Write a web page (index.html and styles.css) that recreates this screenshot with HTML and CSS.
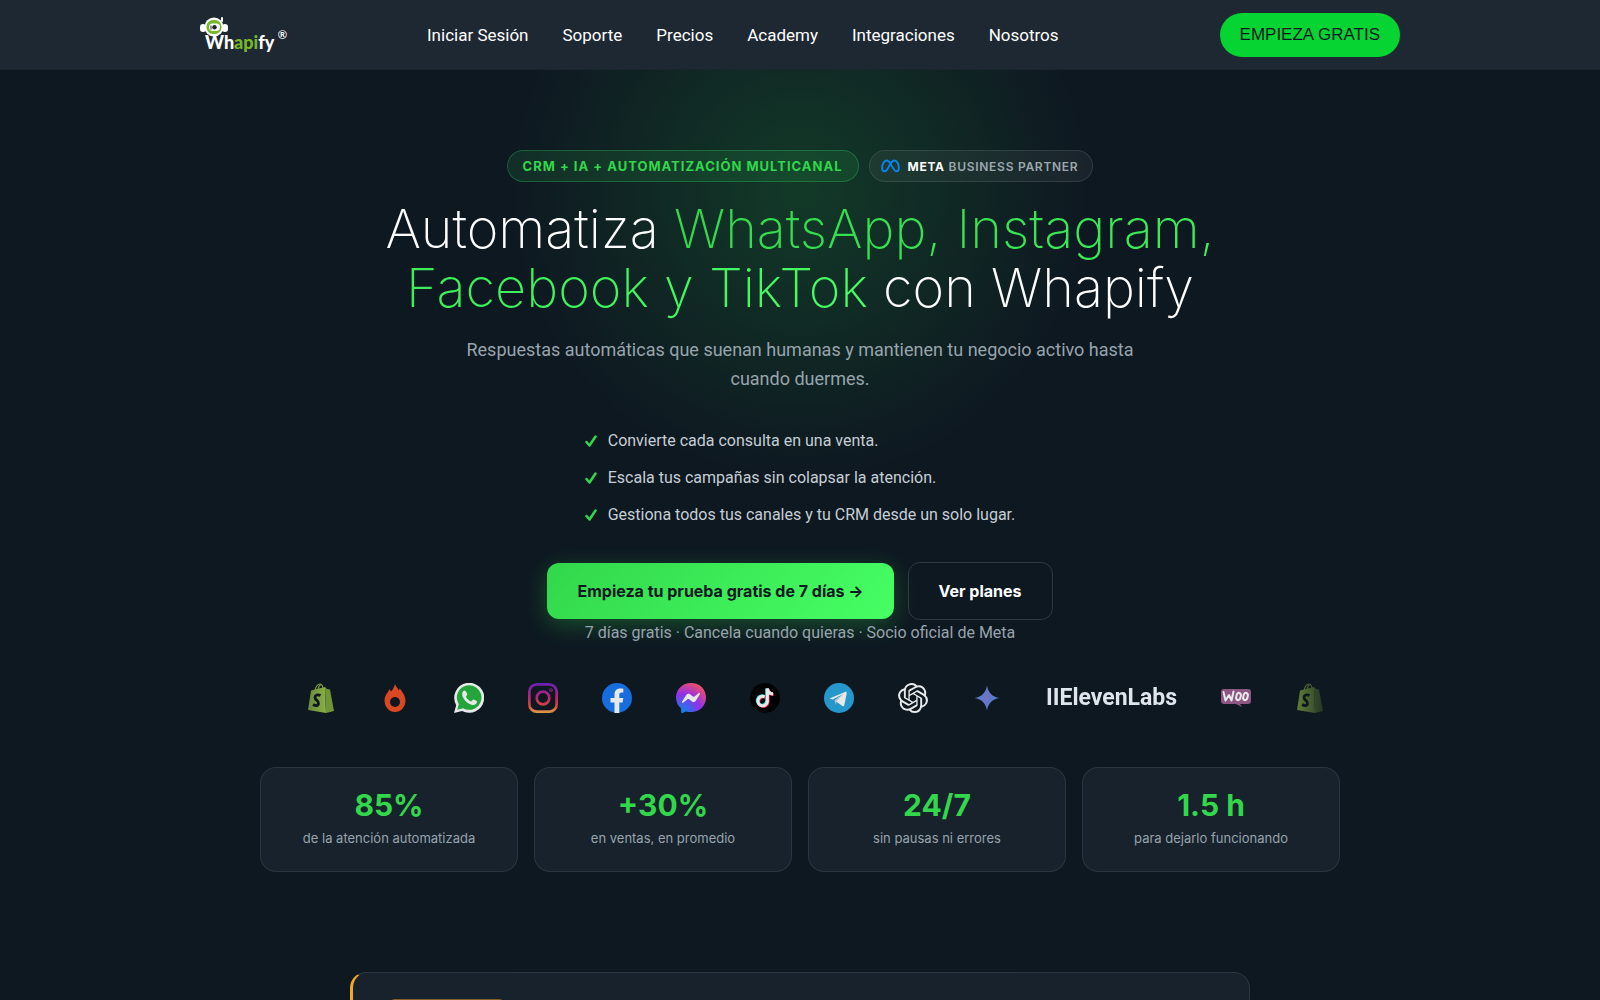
FILE: index.html
```html
<!DOCTYPE html>
<html lang="es">
<head>
    <meta charset="UTF-8">
    <meta name="viewport" content="width=device-width, initial-scale=1.0">
    <title>Whapify</title>
    <link rel="stylesheet" href="styles.css">
</head>
<body>
    <header class="header">
        <div class="header-inner">
            <a href="#" class="logo" aria-label="Whapify">
                <svg width="90" height="40" viewBox="0 0 90 40">
                    <rect x="0" y="9" width="6" height="8" rx="3" fill="#fff"/>
                    <rect x="22" y="9" width="6" height="8" rx="3" fill="#fff"/>
                    <path d="M22 6V3" stroke="#fff" stroke-width="2" stroke-linecap="round"/>
                    <circle cx="14" cy="12" r="9.500" fill="#fff"/>
                    <rect x="6.500" y="5" width="15" height="14" rx="6.500" fill="#76b82a"/>
                    <rect x="9" y="8.500" width="11" height="7.500" rx="3.700" fill="#fff"/>
                    <circle cx="14.500" cy="12.300" r="2.200" fill="#1e2832"/>
                    <path d="M11 10.500v4" stroke="#1e2832" stroke-width="1"/>
                    <text x="5" y="34" class="logo-text">Wh<tspan class="logo-green">api</tspan>fy</text>
                    <text x="78" y="24" class="logo-mark">®</text>
                </svg>
            </a>
            <nav class="nav">
                <a href="#">Iniciar Sesión</a>
                <a href="#">Soporte</a>
                <a href="#">Precios</a>
                <a href="#">Academy</a>
                <a href="#">Integraciones</a>
                <a href="#">Nosotros</a>
            </nav>
            <a href="#" class="header-cta">EMPIEZA GRATIS</a>
        </div>
    </header>

    <main>
        <section class="hero">
            <div class="badges">
                <span class="badge badge-green">CRM + IA + AUTOMATIZACIÓN MULTICANAL</span>
                <span class="badge badge-meta">
                    <svg width="19" height="14" viewBox="0 0 20 14" fill="none" stroke="#0a84e8" stroke-width="2" stroke-linejoin="round"><path d="M10 4.500C8.800 2.500 7.500 1.200 5.800 1.200 3 1.200 1.200 5.500 1.200 9c0 2.200.9 3.600 2.500 3.600C5.800 12.600 7.200 10 10 4.500c1.200-2 2.500-3.300 4.200-3.300 2.800 0 4.600 4.300 4.600 7.800 0 2.200-.9 3.600-2.500 3.600C14.200 12.600 12.800 9.500 10 4.500z"/></svg>
                    <span><strong>META</strong> BUSINESS PARTNER</span>
                </span>
            </div>

            <h1>Automatiza <span class="highlight">WhatsApp, Instagram,<br>Facebook y TikTok</span> con Whapify</h1>
            <p class="subtitle">Respuestas automáticas que suenan humanas y mantienen tu negocio activo hasta cuando duermes.</p>

            <ul class="benefits">
                <li><svg class="check" viewBox="0 0 12 12"><path d="M1.500 7l3 3.500L10.500 1.500"/></svg>Convierte cada consulta en una venta.</li>
                <li><svg class="check" viewBox="0 0 12 12"><path d="M1.500 7l3 3.500L10.500 1.500"/></svg>Escala tus campañas sin colapsar la atención.</li>
                <li><svg class="check" viewBox="0 0 12 12"><path d="M1.500 7l3 3.500L10.500 1.500"/></svg>Gestiona todos tus canales y tu CRM desde un solo lugar.</li>
            </ul>

            <div class="actions">
                <a href="#" class="btn btn-primary">Empieza tu prueba gratis de 7 días →</a>
                <a href="#" class="btn btn-outline">Ver planes</a>
            </div>
            <p class="note">7 días gratis · Cancela cuando quieras · Socio oficial de Meta</p>

            <div class="brands">
                <svg viewBox="0 0 30 30">
                    <path d="M9 8c0-4 3-7 5-7 2 0 3 3 3 6M12 7c0-3 2-5.500 4-5.500" fill="none" stroke="#95bf47" stroke-width="1.200"/>
                    <path d="M5 7.500L19 4l1 26L2 27z" fill="#95bf47"/>
                    <path d="M19 4l2 2 3 .5L28 28l-8 2z" fill="#7ba23c"/>
                    <path d="M14.500 12.500c-3-1.500-5.500-.5-5.500 2 0 3 4 3 3.500 6-.3 2.500-3 2.500-5.500 1" fill="none" stroke="#0f1822" stroke-width="2.800"/>
                </svg>
                <svg viewBox="0 0 30 30">
                    <path d="M15 1c1 3 3 4 3.500 6.500L20 5.500c1 2.500 5.500 6 5.500 12.500a10.500 11 0 0 1-21 0C4.500 12 8 10 9.500 6l1.500 2.500C13 6.500 14 4 15 1z" fill="#f04e23"/>
                    <circle cx="15" cy="19" r="5" fill="#0f1822"/>
                </svg>
                <svg viewBox="0 0 30 30">
                    <path d="M0 30l2.200-7.800A15 15 0 1 1 8 27.900z" fill="#fff"/>
                    <path d="M3.300 26.700l1.500-5.500A12.300 12.300 0 1 1 9 25.200z" fill="#27b43e"/>
                    <path d="M10.500 7.500c-1.300.3-2.500 2-2.300 4 .5 5 6.500 10.500 10.800 10.500 2.200 0 4-1.500 4-3.500 0-.6-3-2-3.600-2-.8 0-1.500 2-2.400 1.900-1.800-.4-4.500-3-5-4.700-.2-.8 1.500-1.500 1.300-2.500-.2-.7-1.500-3.700-2.800-3.700z" fill="#fff"/>
                </svg>
                <svg viewBox="0 0 30 30" fill="none" stroke="url(#insta)" stroke-width="2.700">
                    <defs><linearGradient id="insta" gradientUnits="userSpaceOnUse" x1="15" y1="0" x2="15" y2="30"><stop offset="0" stop-color="#7024c4"/><stop offset=".45" stop-color="#c92683"/><stop offset=".75" stop-color="#e64a45"/><stop offset="1" stop-color="#f2ae4f"/></linearGradient></defs>
                    <rect x="1.350" y="1.350" width="27.300" height="27.300" rx="7.500"/>
                    <circle cx="15" cy="15" r="6.300"/>
                    <circle cx="23" cy="7" r=".5"/>
                </svg>
                <svg viewBox="0 0 30 30">
                    <circle cx="15" cy="15" r="15" fill="#1877f2"/>
                    <path d="M12.500 30V19.500H8.500V15h4v-3.500c0-4 2.400-6 5.800-6 1.500 0 3 .2 3 .2v3.800h-1.700c-1.700 0-2.300 1-2.300 2.200V15h4l-.7 4.500h-3.300V30z" fill="#fff"/>
                </svg>
                <svg viewBox="0 0 30 30">
                    <defs><radialGradient id="msg" cx=".2" cy="1" r="1.150"><stop offset="0" stop-color="#0099ff"/><stop offset=".55" stop-color="#a033ff"/><stop offset=".9" stop-color="#ff5280"/><stop offset="1" stop-color="#ff7061"/></radialGradient></defs>
                    <path d="M15 0C6.500 0 0 6.200 0 14.500c0 4.300 1.800 8 4.700 10.600.8.800.3 3.500.6 4.500.4.700 1.200.4 1.800.1l2.800-1.300c1.600.4 3.300.7 5.100.7 8.500 0 15-6.200 15-14.600S23.500 0 15 0z" fill="url(#msg)"/>
                    <path d="M6 18.700l4.400-7c.7-1.100 2.200-1.400 3.300-.6l3.500 2.600c.3.200.7.200 1 0l4.700-3.600c.7-.5 1.500.3 1.100 1l-4.400 7c-.7 1.100-2.200 1.400-3.300.6l-3.500-2.600c-.3-.2-.7-.2-1 0l-4.700 3.600c-.7.500-1.500-.3-1.100-1z" fill="#fff"/>
                </svg>
                <svg viewBox="0 0 30 30">
                    <circle cx="15" cy="15" r="15" fill="#000"/>
                    <g fill="none" stroke-width="3">
                        <path d="M14 13.200a4.700 4.700 0 1 0 2.700 4.700V5.500c.4 3.300 2.600 5 5.600 5.200" stroke="#25f4ee"/>
                        <path d="M15.400 14.400a4.700 4.700 0 1 0 2.700 4.700V6.200c.4 3.300 2.600 5 5.600 5.200" stroke="#fe2c55"/>
                        <path d="M14.700 13.800a4.700 4.700 0 1 0 2.700 4.700V5.500c.4 3.600 2.600 5.300 5.600 5.500" stroke="#fff"/>
                    </g>
                </svg>
                <svg viewBox="0 0 30 30">
                    <circle cx="15" cy="15" r="15" fill="#29a6de"/>
                    <path d="M5.500 15.500L21 8.900c1-.4 1.900.2 1.700 1.500l-2.400 11.900c-.2 1-1 1.200-1.800.7l-8-5.500 9-6.500-11 5.500z" fill="#fff"/>
                    <path d="M10.500 17.500l9-6.500-7 7.500-.5 3.500z" fill="#c8daea"/>
                </svg>
                <svg viewBox="0 0 24 24" fill="#fff">
                    <path d="M22.282 9.821a5.985 5.985 0 0 0-.516-4.910 6.046 6.046 0 0 0-6.510-2.900A6.065 6.065 0 0 0 4.981 4.182a5.985 5.985 0 0 0-3.998 2.900 6.046 6.046 0 0 0 .743 7.097 5.980 5.980 0 0 0 .511 4.911 6.051 6.051 0 0 0 6.515 2.900A5.985 5.985 0 0 0 13.260 24a6.056 6.056 0 0 0 5.772-4.206 5.990 5.990 0 0 0 3.998-2.900 6.056 6.056 0 0 0-.748-7.073zM13.260 22.430a4.476 4.476 0 0 1-2.876-1.041l.142-.080 4.778-2.758a.795.795 0 0 0 .393-.682v-6.737l2.020 1.169a.071.071 0 0 1 .038.052v5.583a4.504 4.504 0 0 1-4.495 4.494zM3.600 18.304a4.471 4.471 0 0 1-.535-3.014l.142.085 4.783 2.759a.771.771 0 0 0 .781 0l5.843-3.369v2.332a.080.080 0 0 1-.033.062L9.740 19.950a4.499 4.499 0 0 1-6.140-1.646zM2.341 7.896a4.485 4.485 0 0 1 2.366-1.973v5.677a.766.766 0 0 0 .388.677l5.814 3.354-2.020 1.169a.076.076 0 0 1-.071 0l-4.830-2.787A4.504 4.504 0 0 1 2.341 7.872zm16.596 3.856l-5.833-3.388 2.015-1.164a.076.076 0 0 1 .071 0l4.830 2.792a4.494 4.494 0 0 1-.676 8.104v-5.677a.790.790 0 0 0-.407-.667zm2.011-3.024l-.142-.085-4.774-2.782a.776.776 0 0 0-.785 0L9.409 9.230V6.897a.066.066 0 0 1 .028-.061l4.830-2.787a4.499 4.499 0 0 1 6.681 4.660zM8.307 12.863l-2.020-1.164a.080.080 0 0 1-.038-.057V6.075a4.499 4.499 0 0 1 7.376-3.454l-.142.081L8.704 5.460a.795.795 0 0 0-.393.681zm1.097-2.365l2.602-1.500 2.607 1.500v2.999l-2.597 1.500-2.607-1.500z"/>
                </svg>
                <svg viewBox="0 0 30 30">
                    <defs><linearGradient id="gem" x1="0" y1=".2" x2="1" y2=".8"><stop offset="0" stop-color="#4796e3"/><stop offset=".5" stop-color="#7b7fd6"/><stop offset="1" stop-color="#3f8fe6"/></linearGradient></defs>
                    <path d="M15 2.500c1.200 7.200 5.300 11.300 12.500 12.500-7.200 1.200-11.300 5.300-12.500 12.500C13.800 20.300 9.700 16.200 2.500 15 9.700 13.800 13.800 9.700 15 2.500z" fill="url(#gem)"/>
                </svg>
                <span class="eleven">IIElevenLabs</span>
                <svg viewBox="0 0 30 30">
                    <path d="M3 6h24a3 3 0 0 1 3 3v9a3 3 0 0 1-3 3h-8l2 3-6-3H3a3 3 0 0 1-3-3V9a3 3 0 0 1 3-3z" fill="#9b5c8f"/>
                    <g fill="none" stroke="#fff" stroke-width="2" stroke-linecap="round" stroke-linejoin="round"><path d="M2.500 9l2 8.500L8 12l2.500 5.500 2-9"/><ellipse cx="17.500" cy="13.500" rx="2.200" ry="3.700" transform="rotate(15 17.500 13.500)"/><ellipse cx="24.500" cy="13.500" rx="2.200" ry="3.700" transform="rotate(15 24.500 13.500)"/></g>
                </svg>
                <svg viewBox="0 0 30 30">
                    <path d="M9 8c0-4 3-7 5-7 2 0 3 3 3 6M12 7c0-3 2-5.500 4-5.500" fill="none" stroke="#95bf47" stroke-width="1.200"/>
                    <path d="M5 7.500L19 4l1 26L2 27z" fill="#95bf47"/>
                    <path d="M19 4l2 2 3 .5L28 28l-8 2z" fill="#7ba23c"/>
                    <path d="M14.500 12.500c-3-1.500-5.500-.5-5.500 2 0 3 4 3 3.500 6-.3 2.500-3 2.500-5.500 1" fill="none" stroke="#0f1822" stroke-width="2.800"/>
                </svg>
            </div>

            <div class="stats">
                <div class="stat"><strong>85%</strong><span>de la atención automatizada</span></div>
                <div class="stat"><strong>+30%</strong><span>en ventas, en promedio</span></div>
                <div class="stat"><strong>24/7</strong><span>sin pausas ni errores</span></div>
                <div class="stat"><strong>1.5 h</strong><span>para dejarlo funcionando</span></div>
            </div>
        </section>

        <section class="callout">
            <div class="callout-tag"></div>
        </section>
    </main>
</body>
</html>
```
FILE: styles.css
```css
* {
    box-sizing: border-box;
}
body {
    font-family: Inter, sans-serif;
    margin: 0;
    background-color: #0e1821;
    color: white;
}
a {
    color: inherit;
    text-decoration: none;
}
.header {
    background-color: #1e2832;
    border-bottom: 1px solid #1a252e;
}
.header-inner {
    max-width: 1200px;
    height: 69px;
    margin: 0 auto;
    display: flex;
    align-items: center;
}
.logo svg {
    display: block;
    overflow: visible;
}
.logo-text {
    font-family: Lato, sans-serif;
    font-size: 18px;
    font-weight: 900;
    fill: white;
}
.logo-green {
    fill: #76b82a;
}
.logo-mark {
    font-family: "Liberation Sans", Arial, sans-serif;
    font-size: 12px;
    font-weight: 700;
    fill: white;
}
.nav {
    display: flex;
    gap: 34px;
    margin: 0 auto 0 137px;
    font-family: Roboto, sans-serif;
    font-size: 17px;
}
.header-cta {
    padding: 0 20px;
    border-radius: 22px;
    background-color: #06d432;
    color: #0f1822;
    font-family: "Liberation Sans", Arial, sans-serif;
    font-size: 17px;
    line-height: 44px;
}
.hero {
    display: flex;
    flex-direction: column;
    align-items: center;
    padding: 80px 20px 100px;
    background: radial-gradient(circle 290px at 50% 120px, rgba(37, 211, 70, 0.18), rgba(37, 211, 70, 0.09) 50%, transparent);
}
.badges {
    display: flex;
    gap: 10px;
}
.badge {
    display: flex;
    align-items: center;
    gap: 8px;
    height: 32px;
    padding: 0 15px;
    border-radius: 16px;
    font-size: 13px;
    font-weight: 600;
}
.badge-green {
    border: 1px solid rgba(48, 209, 88, 0.3);
    background-color: rgba(48, 209, 88, 0.12);
    color: #32d74b;
    font-weight: 700;
    letter-spacing: 1px;
}
.badge-meta {
    padding: 0 14px 0 11px;
    border: 1px solid rgba(255, 255, 255, 0.1);
    background-color: rgba(255, 255, 255, 0.05);
    color: #9ca8ae;
    font-size: 12px;
    letter-spacing: 0.06em;
}
.badge-meta strong {
    color: white;
    font-weight: 700;
}
h1 {
    margin: 17px 0 18px;
    font-size: 54px;
    font-weight: 200;
    line-height: 59px;
    text-align: center;
}
.highlight {
    background: linear-gradient(135deg, #32d74b, #46ff64);
    -webkit-background-clip: text;
    background-clip: text;
    color: transparent;
}
.subtitle {
    max-width: 680px;
    margin: 0;
    color: #98a4ad;
    font-family: Roboto, sans-serif;
    font-size: 18px;
    line-height: 29px;
    text-align: center;
}
.benefits {
    display: grid;
    gap: 12px;
    margin: 35px 0;
    padding: 0;
    list-style: none;
    color: #c6ced5;
    font-family: Roboto, sans-serif;
    font-size: 16px;
    line-height: 25px;
}
.benefits li {
    display: flex;
    align-items: center;
    gap: 11px;
}
.check {
    width: 12px;
    height: 12px;
    fill: none;
    stroke: #32d74b;
    stroke-width: 2.5;
    stroke-linecap: round;
    stroke-linejoin: round;
}
.actions {
    display: flex;
    align-items: center;
    gap: 14px;
}
.btn {
    padding: 0 30px;
    border-radius: 12px;
    font-size: 16px;
    font-weight: 700;
    line-height: 56px;
}
.btn-primary {
    background: linear-gradient(135deg, #32d74b, #46ff64);
    color: #0f1822;
    box-shadow: 0 6px 24px rgba(50, 215, 75, 0.3);
}
.btn-outline {
    border: 1px solid rgba(255, 255, 255, 0.14);
}
.note {
    margin: 0;
    color: #98a4ad;
    font-family: Roboto, sans-serif;
    font-size: 16px;
    line-height: 25px;
}
.brands {
    display: flex;
    align-items: center;
    gap: 44px;
    width: 100%;
    max-width: 1080px;
    margin: 38px 0 54px;
    padding-left: 46px;
    overflow: hidden;
    -webkit-mask-image: linear-gradient(90deg, transparent, black 6%, black 94%, transparent);
    mask-image: linear-gradient(90deg, transparent, black 6%, black 94%, transparent);
}
.brands svg {
    flex: none;
    width: 30px;
    height: 30px;
    opacity: 0.9;
}
.eleven {
    color: #dfe5ec;
    font-family: Roboto, sans-serif;
    font-size: 23px;
    font-weight: 700;
    line-height: 30px;
}
.stats {
    display: grid;
    grid-template-columns: repeat(4, 1fr);
    gap: 16px;
    width: 100%;
    max-width: 1080px;
}
.stat {
    padding: 19px 16px 23px;
    border: 1px solid rgba(255, 255, 255, 0.09);
    border-radius: 16px;
    background-color: #17222c;
    text-align: center;
}
.stat strong {
    display: block;
    color: #32d74b;
    font-size: 30px;
    font-weight: 700;
    line-height: 36px;
}
.stat span {
    display: block;
    margin-top: 5px;
    color: #98a4ad;
    font-size: 13px;
    line-height: 20px;
}
.callout {
    max-width: 900px;
    margin: 0 auto;
    padding: 26px 36px;
    border: 1px solid rgba(255, 255, 255, 0.09);
    border-left: 3px solid #f5a623;
    border-radius: 16px;
    background-color: #17222c;
}
.callout-tag {
    width: 116px;
    height: 28px;
    border: 1px solid rgba(245, 166, 35, 0.4);
    border-radius: 6px;
    background-color: rgba(245, 166, 35, 0.12);
}
```
